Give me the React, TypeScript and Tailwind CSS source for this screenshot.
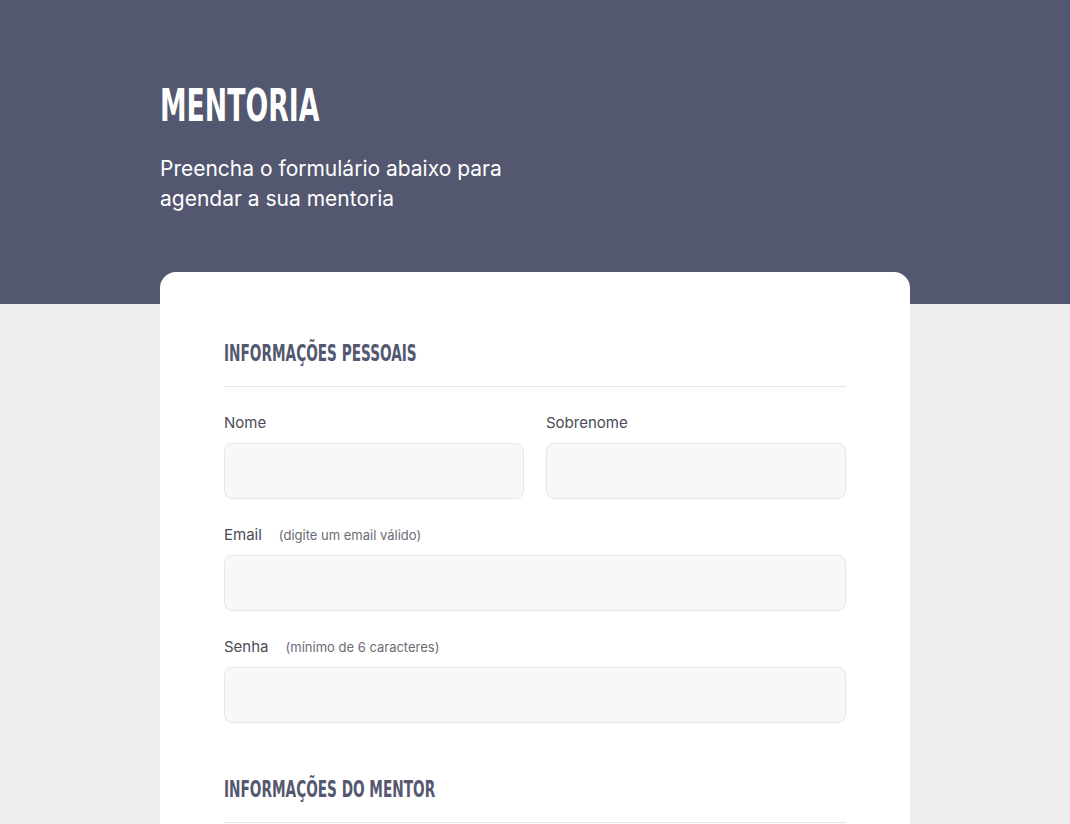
export default function App() {
  const display = "font-['Liberation_Sans_Narrow','DejaVu_Sans_Condensed',sans-serif]";
  const body = "font-['Inter','Noto_Sans',sans-serif]";

  return (
    <div className={`min-h-screen bg-[#eeeeee] ${body}`}>
      {/* cabeçalho */}
      <header className="h-[304px] bg-[#535870] px-[160px] pt-[82px]">
        <h1
          className={`${display} inline-block origin-left scale-x-[0.66] text-[45px] font-bold leading-[48px] text-white`}
        >
          MENTORIA
        </h1>
        <p className="mt-[24px] w-[380px] text-[21px] leading-[30px] text-white">
          Preencha o formulário abaixo para agendar a sua mentoria
        </p>
      </header>

      {/* formulário */}
      <div className="mx-[160px] -mt-8 rounded-t-2xl bg-white px-16 pt-[64px] pb-16">
        <Section title="INFORMAÇÕES PESSOAIS" />
        <div className="grid grid-cols-2 gap-x-[22px]">
          <Field label="Nome" />
          <Field label="Sobrenome" />
        </div>
        <Field label="Email" hint="(digite um email válido)" />
        <Field label="Senha" hint="(mínimo de 6 caracteres)" type="password" />

        <div className="mt-[49px]">
          <Section title="INFORMAÇÕES DO MENTOR" />
        </div>
      </div>
    </div>
  );
}

function Section({ title }: { title: string }) {
  return (
    <div className="mb-[26px] border-b border-[#e4e4ec] pb-[16px]">
      <h2 className="font-['Liberation_Sans_Narrow','DejaVu_Sans_Condensed',sans-serif] inline-block origin-left scale-x-[0.66] text-[23px] font-bold leading-[34px] text-[#535870]">
        {title}
      </h2>
    </div>
  );
}

function Field({ label, hint, type = "text" }: { label: string; hint?: string; type?: string }) {
  return (
    <div className="mb-[26px]">
      <label className="flex h-[20px] items-baseline gap-[17px] text-[15px] leading-[20px] text-[#4a4b57]">
        {label}
        {hint && <span className="text-[13px] text-[#6b6c78]">{hint}</span>}
      </label>
      <input
        type={type}
        className="mt-[10px] block h-[56px] w-full rounded-lg border border-[#e6e6ef] bg-[#f8f8fb] px-4 text-[14px] outline-none"
      />
    </div>
  );
}
